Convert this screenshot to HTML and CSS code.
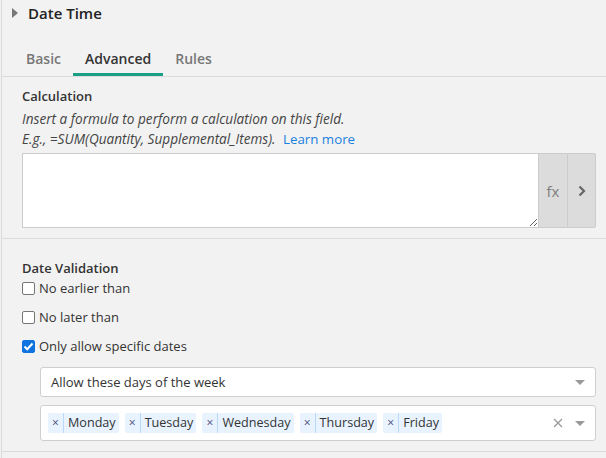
FILE: index.html
```html
<!DOCTYPE html>
<html>
<head>
<meta charset="utf-8">
<link rel="stylesheet" href="styles.css">
</head>
<body>
<div class="panel">
  <div class="header">
    <svg class="caret" width="6" height="10" viewBox="0 0 6 10"><path d="M0 0 L6 5 L0 10 Z" fill="#777"/></svg>
    <span class="title">Date Time</span>
  </div>
  <div class="tabs">
    <div class="tab">Basic</div>
    <div class="tab active">Advanced</div>
    <div class="tab">Rules</div>
  </div>
  <div class="section calc">
    <div class="label">Calculation</div>
    <div class="hints">
      <div class="hint">Insert a formula to perform a calculation on this field.</div>
      <div class="hint">E.g., =SUM(Quantity, Supplemental_Items). <a class="link">Learn more</a></div>
    </div>
    <div class="formula">
      <textarea class="ta"></textarea>
      <div class="btn fx">fx</div>
      <div class="btn arrow"><svg width="8" height="12" viewBox="0 0 8 12"><path d="M1.5 1.5 L6 6 L1.5 10.5" fill="none" stroke="#666" stroke-width="2.2"/></svg></div>
    </div>
  </div>
  <div class="section valid">
    <div class="label">Date Validation</div>
    <label class="check"><span class="box"></span>No earlier than</label>
    <label class="check"><span class="box"></span>No later than</label>
    <label class="check"><span class="box on"><svg width="11" height="9" viewBox="0 0 11 9"><path d="M1.5 4.5 L4.2 7.2 L9.5 1.5" fill="none" stroke="#fff" stroke-width="2"/></svg></span>Only allow specific dates</label>
    <div class="sub">
      <div class="select">
        <span class="sel-text">Allow these days of the week</span>
        <span class="dd"></span>
      </div>
      <div class="tagbox">
        <div class="tags">
          <span class="tag"><span class="x">×</span><span class="tl">Monday</span></span>
          <span class="tag"><span class="x">×</span><span class="tl">Tuesday</span></span>
          <span class="tag"><span class="x">×</span><span class="tl">Wednesday</span></span>
          <span class="tag"><span class="x">×</span><span class="tl">Thursday</span></span>
          <span class="tag"><span class="x">×</span><span class="tl">Friday</span></span>
        </div>
        <span class="clear"><svg width="10" height="10" viewBox="0 0 10 10"><path d="M1 1 L9 9 M9 1 L1 9" stroke="#999" stroke-width="1.3"/></svg></span>
        <span class="dd"></span>
      </div>
    </div>
  </div>
</div>
</body>
</html>
```
FILE: styles.css
```css
* { box-sizing: border-box; }
html, body { margin: 0; padding: 0; }
body {
  background: #f2f2f2;
  font-family: "Open Sans", "Liberation Sans", sans-serif;
  font-size: 13px;
  color: #333;
  width: 606px;
  height: 458px;
  overflow: hidden;
}
.panel {
  border-left: 1px solid #dadada;
  margin-left: 1px;
  height: 458px;
}
.header {
  display: flex;
  align-items: center;
  height: 28px;
  padding-left: 10px;
}
.caret { margin-right: 10px; margin-top: -2px; }
.title { font-size: 15px; font-weight: 600; color: #222; margin-top: -2px; }
.tabs {
  display: flex;
  margin-top: 15px;
  padding-left: 12px;
  border-bottom: 1px solid #dcdcdc;
  height: 34px;
}
.tab {
  padding: 0 12px;
  font-size: 14px;
  font-weight: 600;
  color: #777;
  line-height: 32px;
  border-bottom: 3px solid transparent;
  height: 33px;
}
.tab.active { color: #333; border-bottom-color: #1a9e86; }
.section { padding-left: 20px; padding-right: 10px; }
.calc { padding-top: 9px; padding-bottom: 10px; border-bottom: 1px solid #dcdcdc; }
.label { font-weight: 600; font-size: 13px; line-height: 20px; color: #333; }
.hints { margin-top: 3px; }
.hint { font-style: italic; line-height: 20px; color: #444; font-size: 13.6px; }
.link { font-style: normal; color: #1a7fe0; margin-left: 4px; font-size: 13.3px; }
.formula { display: flex; margin-top: 4px; height: 75px; }
.ta {
  flex: 1;
  height: 75px;
  border: 1px solid #cccccc;
  border-right: none;
  background: #fff;
  resize: vertical;
  margin: 0;
  padding: 4px;
}
.btn {
  width: 29px;
  background: #dcdcdc;
  border: 1px solid #cccccc;
  display: flex;
  align-items: center;
  justify-content: center;
  color: #808080;
  font-size: 15px;
}
.btn.fx { border-right: none; }
.btn.arrow { border-radius: 0 2px 2px 0; }
.valid { padding-top: 19px; border-bottom: 1px solid #dcdcdc; padding-bottom: 10px; }
.check {
  display: flex;
  align-items: center;
  line-height: 18px;
  height: 18px;
  margin-top: 1px;
  margin-bottom: 11px;
  color: #333;
}
.box {
  width: 13px;
  height: 13px;
  border: 1px solid #767676;
  border-radius: 2px;
  background: #fff;
  margin-right: 4px;
  display: flex;
  align-items: center;
  justify-content: center;
}
.box.on { background: #0f74e0; border-color: #0f74e0; }
.sub { padding-left: 18px; margin-top: 12px; }
.select {
  display: flex;
  align-items: center;
  height: 30px;
  background: #fff;
  border: 1px solid #cfcfcf;
  border-radius: 3px;
  padding-left: 10px;
  padding-right: 10px;
}
.sel-text { flex: 1; color: #333; }
.dd {
  width: 0; height: 0;
  border-left: 5px solid transparent;
  border-right: 5px solid transparent;
  border-top: 5px solid #999;
}
.tagbox {
  display: flex;
  align-items: center;
  height: 36px;
  margin-top: 8px;
  background: #fff;
  border: 1px solid #cfcfcf;
  border-radius: 3px;
  padding-left: 7px;
  padding-right: 10px;
}
.tags { flex: 1; display: flex; gap: 6px; }
.tag {
  display: flex;
  align-items: stretch;
  background: #e8f3ff;
  border-radius: 2px;
  height: 20px;
  line-height: 20px;
}
.tag .x {
  width: 16px;
  text-align: center;
  color: #4a4a7a;
  font-size: 12px;
  border-right: 1px solid #b9d9fb;
}
.tag .tl { padding: 0 3px 0 4px; color: #333; font-size: 12.6px; }
.clear { margin-right: 12px; display: flex; }
```
